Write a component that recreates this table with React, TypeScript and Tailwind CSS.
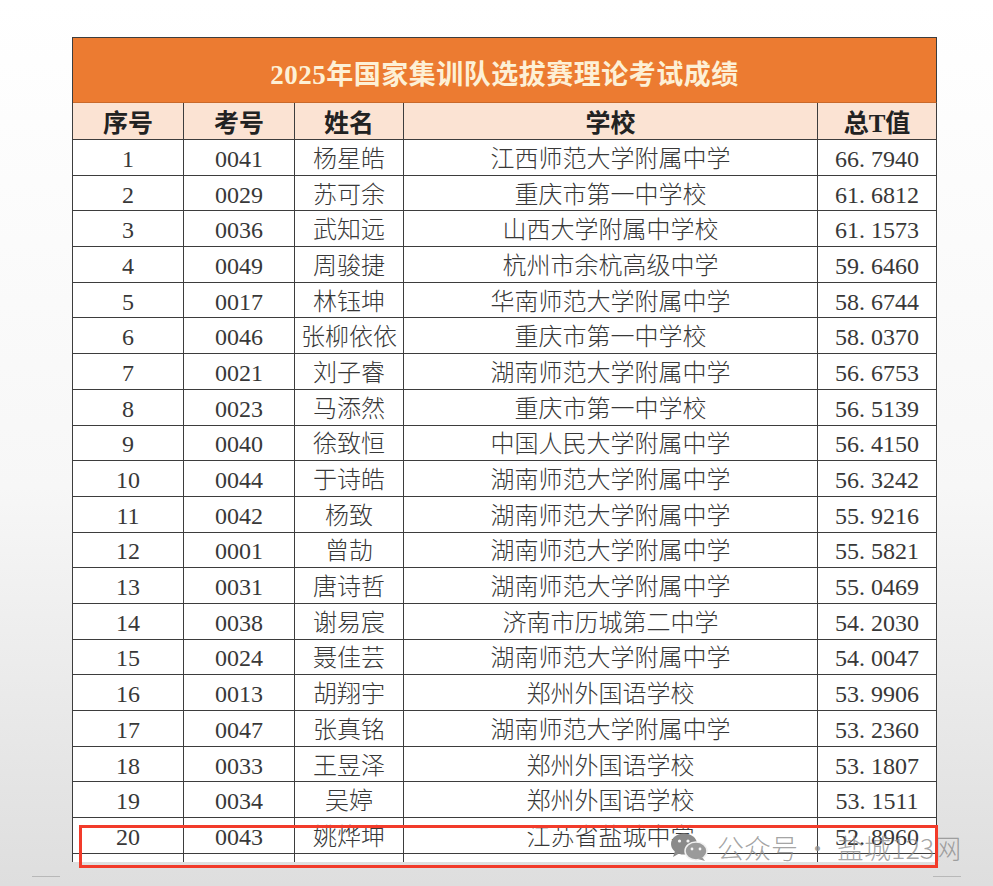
import React from "react";

type Row = { no: number; id: string; name: string; school: string; score: string };

const rows: Row[] = [
  { no: 1, id: "0041", name: "杨星皓", school: "江西师范大学附属中学", score: "66.7940" },
  { no: 2, id: "0029", name: "苏可余", school: "重庆市第一中学校", score: "61.6812" },
  { no: 3, id: "0036", name: "武知远", school: "山西大学附属中学校", score: "61.1573" },
  { no: 4, id: "0049", name: "周骏捷", school: "杭州市余杭高级中学", score: "59.6460" },
  { no: 5, id: "0017", name: "林钰坤", school: "华南师范大学附属中学", score: "58.6744" },
  { no: 6, id: "0046", name: "张柳依依", school: "重庆市第一中学校", score: "58.0370" },
  { no: 7, id: "0021", name: "刘子睿", school: "湖南师范大学附属中学", score: "56.6753" },
  { no: 8, id: "0023", name: "马添然", school: "重庆市第一中学校", score: "56.5139" },
  { no: 9, id: "0040", name: "徐致恒", school: "中国人民大学附属中学", score: "56.4150" },
  { no: 10, id: "0044", name: "于诗皓", school: "湖南师范大学附属中学", score: "56.3242" },
  { no: 11, id: "0042", name: "杨致", school: "湖南师范大学附属中学", score: "55.9216" },
  { no: 12, id: "0001", name: "曾劼", school: "湖南师范大学附属中学", score: "55.5821" },
  { no: 13, id: "0031", name: "唐诗哲", school: "湖南师范大学附属中学", score: "55.0469" },
  { no: 14, id: "0038", name: "谢易宸", school: "济南市历城第二中学", score: "54.2030" },
  { no: 15, id: "0024", name: "聂佳芸", school: "湖南师范大学附属中学", score: "54.0047" },
  { no: 16, id: "0013", name: "胡翔宇", school: "郑州外国语学校", score: "53.9906" },
  { no: 17, id: "0047", name: "张真铭", school: "湖南师范大学附属中学", score: "53.2360" },
  { no: 18, id: "0033", name: "王昱泽", school: "郑州外国语学校", score: "53.1807" },
  { no: 19, id: "0034", name: "吴婷", school: "郑州外国语学校", score: "53.1511" },
  { no: 20, id: "0043", name: "姚烨坤", school: "江苏省盐城中学", score: "52.8960" },
];

const cols = "grid grid-cols-[111px_111px_109px_414px_119px]";
const cell =
  "h-[35.7px] border-r-[1.5px] border-b-[1.5px] border-[#3d3d3d] flex items-center justify-center overflow-hidden pt-[3px]";

function Score({ v }: { v: string }) {
  const [a, b] = v.split(".");
  return (
    <span>
      {a}
      <span className="inline-block w-[12px] text-left">.</span>
      {b}
    </span>
  );
}

function WeChat() {
  return (
    <svg width="40" height="30" viewBox="0 0 40 30">
      <ellipse cx="15" cy="12" rx="13" ry="10.5" fill="#8a8a8a" />
      <path d="M6 19 L4 25 L11 21 Z" fill="#8a8a8a" />
      <ellipse cx="27" cy="19" rx="11" ry="9" fill="#9a9a9a" stroke="#f2f2f2" strokeWidth="1.5" />
      <path d="M33 25 L36 29 L29 27 Z" fill="#9a9a9a" />
      <circle cx="10.5" cy="9" r="1.6" fill="#f4f4f4" />
      <circle cx="19" cy="9" r="1.6" fill="#f4f4f4" />
      <circle cx="23" cy="17" r="1.4" fill="#f4f4f4" />
      <circle cx="31" cy="17" r="1.4" fill="#f4f4f4" />
    </svg>
  );
}

export default function App() {
  return (
    <div
      className="relative w-[993px] h-[886px] overflow-hidden bg-linear-to-b from-white via-[#f7f7f7] via-55% to-[#dedede] text-[#383838]"
      style={{ fontFamily: '"Liberation Serif", "Noto Sans CJK SC", serif' }}
    >
      <div className="ml-[72px] pt-[37px] w-[865px]">
        <div className="border-l-[1.5px] border-t-[1.5px] border-[#3d3d3d] bg-white">
          {/* title */}
          <div className="h-[65px] bg-[#ec7b31] border-r-[1.5px] border-b border-r-[#3d3d3d] border-b-[#c9692a] flex items-center justify-center pt-[10px] text-[27px] font-bold text-[#fdf0d6] tracking-[0.5px]">
            2025年国家集训队选拔赛理论考试成绩
          </div>
          {/* header */}
          <div className={`${cols} bg-[#fbe3d3] text-[25px] font-bold text-[#222]`}>
            {["序号", "考号", "姓名", "学校", "总T值"].map((h) => (
              <div key={h} className={`${cell} h-[37px] pt-[6px]`}>
                {h}
              </div>
            ))}
          </div>
          {/* rows */}
          {rows.map((r) => (
            <div key={r.no} className={`${cols} text-[24px] font-light`}>
              <div className={cell}>{r.no}</div>
              <div className={cell}>{r.id}</div>
              <div className={cell}>{r.name}</div>
              <div className={cell}>{r.school}</div>
              <div className={cell}>
                <Score v={r.score} />
              </div>
            </div>
          ))}
          {/* cut-off row */}
          <div className={`${cols} h-[8px] bg-white`}>
            {[0, 1, 2, 3, 4].map((i) => (
              <div key={i} className="border-r-[1.5px] border-[#3d3d3d]" />
            ))}
          </div>
        </div>
      </div>

      {/* watermark */}
      <div className="absolute left-[669px] top-[832px] flex items-center gap-[8px] text-[27px] text-[#8c8c8c]/80 leading-none" style={{ fontFamily: '"Noto Sans CJK SC", sans-serif' }}>
        <WeChat />
        <span className="font-light">公众号 · 盐城123网</span>
      </div>

      {/* highlight box */}
      <div className="absolute left-[79px] top-[825px] w-[859px] h-[43px] border-[3px] border-[#f23b2a]" />

      {/* small marks */}
      <div className="absolute left-[32px] top-[876px] w-[28px] h-px bg-[#b8b8b8]" />
      <div className="absolute left-[933px] top-[876px] w-[28px] h-px bg-[#b8b8b8]" />
    </div>
  );
}
